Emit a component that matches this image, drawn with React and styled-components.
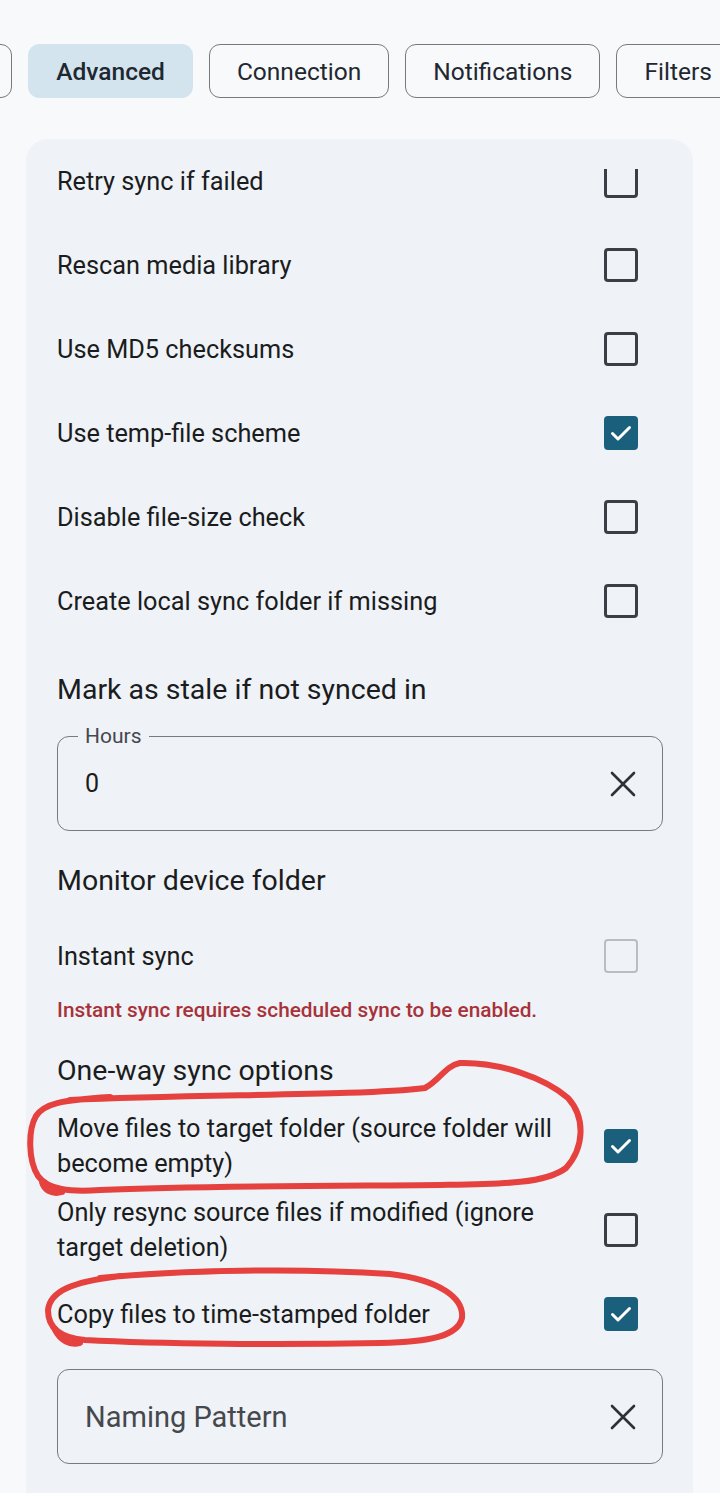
import React, { useLayoutEffect, useRef } from "react";
import styled, { createGlobalStyle } from "styled-components";

const GlobalStyle = createGlobalStyle`
  body {
    margin: 0;
    background: #f8f9fb;
    font-family: Roboto, "Noto Sans", Arial, sans-serif;
    color: #1a1c20;
  }
`;

const Page = styled.div`
  position: relative;
  width: 720px;
  min-height: 1493px;
  overflow: hidden;
`;

const TabStrip = styled.div`
  display: flex;
  gap: 16px;
  padding-top: 44px;
  overflow-x: hidden;
  white-space: nowrap;
`;

const Tab = styled.button`
  flex: none;
  height: 54px;
  padding: 0 27px;
  border-radius: 11px;
  border: ${(p) => (p.$active ? "1.5px solid #d3e4ee" : "1.5px solid #76797e")};
  background: ${(p) => (p.$active ? "#d3e4ee" : "transparent")};
  color: #1f2830;
  font-family: Roboto, sans-serif;
  font-size: 24.5px;
  font-weight: ${(p) => (p.$active ? 500 : 400)};
`;

const Card = styled.div`
  margin: 41px 27px 0 26px;
  padding: 0 30px 40px 31px;
  background: #eff2f6;
  border-radius: 22px 22px 0 0;
`;

const Row = styled.div`
  display: flex;
  align-items: center;
  justify-content: space-between;
  gap: 24px;
  min-height: 84px;
  padding: 7px 25px 7px 0;
  box-sizing: border-box;
  margin-top: ${(p) => p.$gap || 0}px;
`;

const RowText = styled.span`
  font-size: 25.3px;
  line-height: 35px;
  color: #1a1c20;
  flex: 1;
`;

const Box = styled.span`
  flex: none;
  width: 34px;
  height: 34px;
  box-sizing: border-box;
  border-radius: 4px;
  display: flex;
  align-items: center;
  justify-content: center;
  border: ${(p) =>
    p.$checked ? "3px solid #1a5f7b" : p.$disabled ? "2.5px solid #b9bdc2" : "3px solid #3b3f45"};
  background: ${(p) => (p.$checked ? "#1a5f7b" : "transparent")};
`;

const ClipBox = styled.span`
  flex: none;
  display: flex;
  align-items: flex-end;
  height: 29px;
  margin-top: 5px;
  overflow: hidden;
`;

const Header = styled.div`
  font-size: 28.5px;
  line-height: 36px;
  color: #1a1c20;
  margin-top: ${(p) => p.$gap}px;
`;

const Field = styled.div`
  position: relative;
  height: 95px;
  box-sizing: border-box;
  margin-top: ${(p) => p.$gap}px;
  border: 1.5px solid #777b80;
  border-radius: 12px;
  display: flex;
  align-items: center;
  justify-content: space-between;
  padding: 0 26px 0 27px;
`;

const FloatLabel = styled.span`
  position: absolute;
  top: -14px;
  left: 20px;
  padding: 0 7px;
  background: #eff2f6;
  font-size: 21px;
  line-height: 26px;
  color: #45484d;
`;

const FieldValue = styled.span`
  font-size: ${(p) => (p.$placeholder ? 29 : 25)}px;
  color: ${(p) => (p.$placeholder ? "#45484d" : "#1a1c20")};
`;

const ClearButton = styled.span`
  display: flex;
  color: #2e3135;
`;

const ErrorText = styled.div`
  font-size: 20.8px;
  line-height: 24px;
  font-weight: 500;
  color: #a8323a;
`;

const Annotation = styled.svg`
  position: absolute;
  left: 0;
  top: 0;
  pointer-events: none;
`;

function Check() {
  return (
    <svg width="24" height="24" viewBox="0 0 24 24" fill="none">
      <path d="M3.5 12.5l5.5 5.5L20.5 6.5" stroke="#fff" strokeWidth="3" strokeLinecap="round" strokeLinejoin="round" />
    </svg>
  );
}

function Checkbox({ checked, disabled }) {
  return (
    <Box $checked={checked} $disabled={disabled}>
      {checked && <Check />}
    </Box>
  );
}

function ClearIcon() {
  return (
    <ClearButton>
      <svg width="26" height="26" viewBox="0 0 26 26">
        <path d="M2 2L24 24M24 2L2 24" stroke="currentColor" strokeWidth="2.6" strokeLinecap="round" />
      </svg>
    </ClearButton>
  );
}

const topRows = [
  { label: "Rescan media library" },
  { label: "Use MD5 checksums" },
  { label: "Use temp-file scheme", checked: true },
  { label: "Disable file-size check" },
  { label: "Create local sync folder if missing" },
];

const oneWay = [
  { label: "Move files to target folder (source folder will become empty)", checked: true },
  { label: "Only resync source files if modified (ignore target deletion)" },
  { label: "Copy files to time-stamped folder", checked: true },
];

const tabs = ["General", "Advanced", "Connection", "Notifications", "Filters"];

export default function App() {
  const stripRef = useRef(null);
  const activeRef = useRef(null);

  useLayoutEffect(() => {
    // strip is scrolled so the active tab sits 28px from the left
    if (stripRef.current && activeRef.current) {
      stripRef.current.scrollLeft = activeRef.current.offsetLeft - 28;
    }
  }, []);

  return (
    <Page>
      <GlobalStyle />
      <TabStrip ref={stripRef}>
        {tabs.map((t) => (
          <Tab key={t} $active={t === "Advanced"} ref={t === "Advanced" ? activeRef : null}>
            {t}
          </Tab>
        ))}
      </TabStrip>

      <Card>
        <Row>
          <RowText>Retry sync if failed</RowText>
          <ClipBox>
            <Checkbox />
          </ClipBox>
        </Row>
        {topRows.map((r) => (
          <Row key={r.label}>
            <RowText>{r.label}</RowText>
            <Checkbox checked={r.checked} />
          </Row>
        ))}

        <Header $gap={29}>Mark as stale if not synced in</Header>
        <Field $gap={28}>
          <FloatLabel>Hours</FloatLabel>
          <FieldValue>0</FieldValue>
          <ClearIcon />
        </Field>

        <Header $gap={32}>Monitor device folder</Header>
        <Row $gap={15}>
          <RowText>Instant sync</RowText>
          <Checkbox disabled />
        </Row>
        <ErrorText>Instant sync requires scheduled sync to be enabled.</ErrorText>

        <Header $gap={31}>One-way sync options</Header>
        <Row $gap={15}>
          <RowText>{oneWay[0].label}</RowText>
          <Checkbox checked />
        </Row>
        <Row>
          <RowText>{oneWay[1].label}</RowText>
          <Checkbox />
        </Row>
        <Row>
          <RowText>{oneWay[2].label}</RowText>
          <Checkbox checked />
        </Row>

        <Field $gap={13}>
          <FieldValue $placeholder>Naming Pattern</FieldValue>
          <ClearIcon />
        </Field>
      </Card>

      <Annotation width="720" height="1493" viewBox="0 0 720 1493">
        <g fill="none" stroke="#e5322f" strokeWidth="6" strokeLinecap="round" strokeLinejoin="round" opacity="0.92">
          <path d="M70 1100 C 200 1094 360 1096 425 1088 C 440 1080 445 1066 460 1063 C 500 1062 545 1078 568 1098 C 586 1118 584 1148 566 1168 C 545 1184 500 1184 440 1185 C 330 1186 200 1186 100 1190 C 70 1192 48 1190 38 1176 C 28 1160 28 1130 36 1116 C 44 1104 60 1100 110 1097" />
          <path d="M42 1182 C 44 1190 52 1195 62 1192" />
          <path d="M100 1278 C 180 1270 300 1268 390 1274 C 440 1280 464 1298 462 1318 C 458 1336 430 1342 380 1343 C 280 1345 160 1344 85 1340 C 60 1338 48 1328 48 1310 C 50 1292 70 1282 120 1276" />
          <path d="M55 1330 C 60 1340 70 1346 80 1343" />
        </g>
      </Annotation>
    </Page>
  );
}
